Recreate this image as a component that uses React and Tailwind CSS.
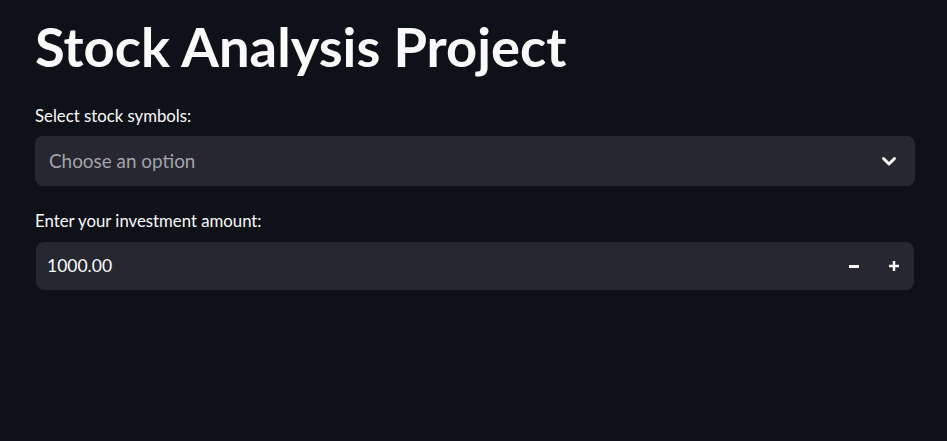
import React from 'react';

// page Streamlit : titre, sélection et montant

const font = { fontFamily: 'Lato, "Liberation Sans", sans-serif' };

const Chevron = () => (
    <svg width="24" height="24" viewBox="0 0 24 24" fill="none" stroke="#fafafa" strokeWidth="3" strokeLinecap="round" strokeLinejoin="round">
        <path d="M6.5 9.5l5.5 5.5 5.5-5.5" />
    </svg>
);

const App = () => {
    return (
        <div className="min-h-[441px] w-full bg-[#0e1117] text-[#fafafa]" style={font}>
            <div className="pl-[35px] pr-[32px] pt-[14px]">
                <h1 className="text-[54.3px] font-bold leading-[1.2]">Stock Analysis Project</h1>

                <div className="mt-[27px]">
                    <label className="block text-[16.75px] leading-[1.2]">Select stock symbols:</label>
                    <div className="mt-[10px] flex h-[50px] items-center justify-between rounded-[8px] bg-[#262730] pl-[14px] pr-[14px]">
                        <span className="text-[18.9px] text-[#a3a4aa]">Choose an option</span>
                        <Chevron />
                    </div>
                </div>

                <div className="mt-[25px]">
                    <label className="block text-[16.75px] leading-[1.2]">Enter your investment amount:</label>
                    <div className="mt-[11px] ml-px mr-px flex h-[48px] items-center justify-between rounded-[8px] bg-[#262730] pl-[11px]">
                        <span className="text-[17.5px]">1000.00</span>
                        <div className="flex h-full items-center">
                            <button className="flex h-full w-[40px] items-center justify-center">
                                <span className="block h-[2.5px] w-[10px] bg-[#fafafa]" />
                            </button>
                            <button className="flex h-full w-[40px] items-center justify-center">
                                <svg width="10" height="10" viewBox="0 0 10 10">
                                    <rect x="0" y="3.75" width="10" height="2.5" fill="#fafafa" />
                                    <rect x="3.75" y="0" width="2.5" height="10" fill="#fafafa" />
                                </svg>
                            </button>
                        </div>
                    </div>
                </div>
            </div>
        </div>
    );
};

export default App;
